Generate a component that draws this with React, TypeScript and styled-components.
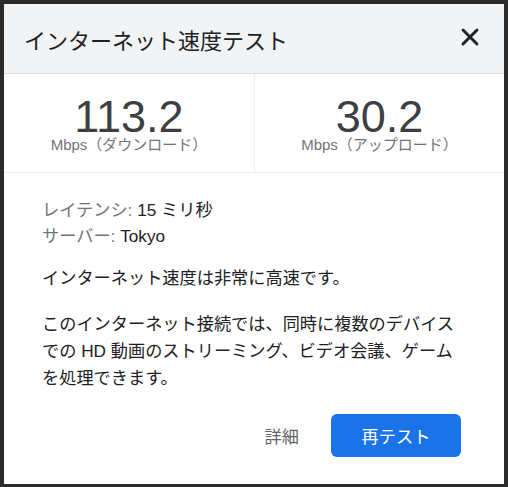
import React from 'react';
import styled, { createGlobalStyle } from 'styled-components';
import { X } from 'lucide-react';

const GlobalStyle = createGlobalStyle`
  html, body {
    margin: 0;
    padding: 0;
    background: #2b2b2b;
  }
  body {
    font-family: 'Liberation Sans', 'Noto Sans CJK JP', sans-serif;
  }
`;

const Page = styled.div`
  padding: 4px 5px 4px 4px;
`;

const Dialog = styled.div`
  width: 500px;
  height: 480px;
  background: #fff;
  display: flex;
  flex-direction: column;
  overflow: hidden;
`;

const Header = styled.header`
  height: 70px;
  box-sizing: border-box;
  display: flex;
  justify-content: space-between;
  align-items: flex-start;
  padding: 19px 20px 0 20px;
  background: #f1f3f4;
  border-bottom: 1px solid #dadce0;
`;

const Title = styled.h1`
  margin: 4px 0 0;
  font-size: 22px;
  line-height: 30px;
  font-weight: 400;
  color: #202124;
`;

const CloseButton = styled.button`
  border: none;
  background: transparent;
  padding: 0;
  width: 28px;
  height: 28px;
  color: #202124;
  cursor: pointer;
  display: flex;
`;

const Stats = styled.div`
  display: grid;
  grid-template-columns: 1fr 1fr;
  height: 99px;
  box-sizing: border-box;
  border-bottom: 1px solid #ebedef;
`;

const Stat = styled.div<{ divided?: boolean }>`
  display: flex;
  flex-direction: column;
  align-items: center;
  padding-top: 24px;
  border-left: ${p => (p.divided ? '1px solid #ebedef' : 'none')};
`;

const Value = styled.div`
  font-size: 45px;
  line-height: 38px;
  color: #3c4043;
`;

const Unit = styled.div`
  font-size: 15px;
  line-height: 18px;
  color: #70757a;
`;

const Body = styled.div`
  flex: 1;
  display: flex;
  flex-direction: column;
  padding: 24px 36px 0 38px;
  color: #202124;
  font-size: 17.2px;
`;

const InfoLine = styled.div`
  line-height: 26px;
`;

const Label = styled.span`
  color: #70757a;
`;

const Summary = styled.p`
  margin: 16px 0 0;
  line-height: 26px;
`;

const Description = styled.p`
  margin: 20px 0 0;
  line-height: 27px;
`;

const Actions = styled.div`
  display: flex;
  justify-content: flex-end;
  align-items: center;
  gap: 16px;
  margin-top: 22px;
  padding-right: 7px;
`;

const TextButton = styled.button`
  height: 43px;
  padding: 0 16px;
  border: none;
  background: transparent;
  color: #5f6368;
  font-family: inherit;
  font-size: 17.2px;
  cursor: pointer;
`;

const PrimaryButton = styled.button`
  width: 130px;
  height: 43px;
  border: none;
  border-radius: 6px;
  background: #1a73e8;
  color: #fff;
  font-family: inherit;
  font-size: 17.2px;
  cursor: pointer;
`;

const App: React.FC = () => {
  return (
    <Page>
      <GlobalStyle />
      <Dialog>
        <Header>
          <Title>インターネット速度テスト</Title>
          <CloseButton aria-label="閉じる">
            <X size={28} strokeWidth={2.5} />
          </CloseButton>
        </Header>

        <Stats>
          <Stat>
            <Value>113.2</Value>
            <Unit>Mbps（ダウンロード）</Unit>
          </Stat>
          <Stat divided>
            <Value>30.2</Value>
            <Unit>Mbps（アップロード）</Unit>
          </Stat>
        </Stats>

        <Body>
          <InfoLine>
            <Label>レイテンシ:</Label> 15 ミリ秒
          </InfoLine>
          <InfoLine>
            <Label>サーバー:</Label> Tokyo
          </InfoLine>
          <Summary>インターネット速度は非常に高速です。</Summary>
          <Description>
            このインターネット接続では、同時に複数のデバイスでの HD 動画のストリーミング、ビデオ会議、ゲームを処理できます。
          </Description>
          <Actions>
            <TextButton>詳細</TextButton>
            <PrimaryButton>再テスト</PrimaryButton>
          </Actions>
        </Body>
      </Dialog>
    </Page>
  );
};

export default App;
